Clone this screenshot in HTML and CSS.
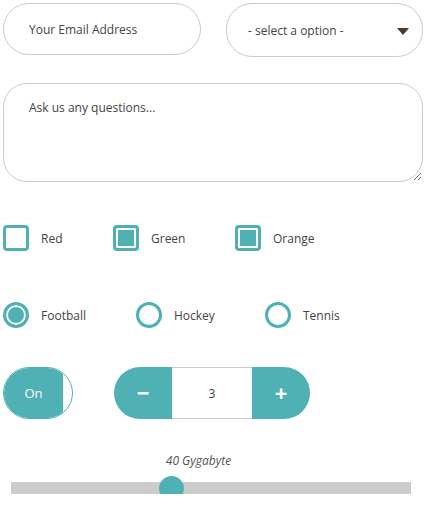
FILE: index.html
```
<!DOCTYPE html>
<html lang="en">
<head>
    <meta charset="UTF-8">
    <meta name="viewport" content="width=device-width, initial-scale=1.0">
    <title>Form Elements</title>
    <link rel="stylesheet" href="styles.css">
</head>
<body>
    <div class="form">
        <div class="row-top">
            <input type="text" class="field" placeholder="Your Email Address">
            <div class="select-wrap">
                <select class="field select">
                    <option>- select a option -</option>
                </select>
                <span class="caret"></span>
            </div>
        </div>

        <textarea class="area" placeholder="Ask us any questions..."></textarea>

        <div class="choices checks">
            <label class="choice"><span class="box"></span>Red</label>
            <label class="choice"><span class="box on"></span>Green</label>
            <label class="choice"><span class="box on"></span>Orange</label>
        </div>

        <div class="choices radios">
            <label class="choice"><span class="dot on"></span>Football</label>
            <label class="choice"><span class="dot"></span>Hockey</label>
            <label class="choice"><span class="dot"></span>Tennis</label>
        </div>

        <div class="controls">
            <div class="toggle">
                <span class="toggle-on">On</span>
            </div>
            <div class="stepper">
                <button class="step">&minus;</button>
                <span class="count">3</span>
                <button class="step">+</button>
            </div>
        </div>

        <div class="slider">
            <div class="slider-label">40 Gygabyte</div>
            <div class="track">
                <span class="thumb" style="left: 40%"></span>
            </div>
        </div>
    </div>
</body>
</html>
```
FILE: styles.css
```
body {
    margin: 0;
    font-family: "Open Sans", Arial, sans-serif;
    font-size: 12px;
    color: #444;
    background: #fff;
}
.form {
    padding: 3px 2px 0 3px;
}
.row-top {
    display: flex;
    gap: 25px;
    align-items: flex-start;
}
.field {
    box-sizing: border-box;
    width: 198px;
    height: 52px;
    border: 1px solid #ccc;
    border-radius: 26px;
    padding: 0 25px;
    font-family: inherit;
    font-size: 12px;
    color: #444;
    background: #fff;
    outline: none;
}
.field::placeholder {
    color: #444;
}
.select-wrap {
    position: relative;
}
.select {
    width: 197px;
    height: 54px;
    padding-left: 21px;
    appearance: none;
    -webkit-appearance: none;
}
.caret {
    position: absolute;
    right: 14px;
    top: 25px;
    border-left: 6px solid transparent;
    border-right: 6px solid transparent;
    border-top: 7px solid #4a3a2a;
}
.area {
    display: block;
    box-sizing: border-box;
    width: 420px;
    height: 99px;
    margin-top: 26px;
    border: 1px solid #ccc;
    border-radius: 24px;
    padding: 15px 25px;
    font-family: inherit;
    font-size: 12px;
    color: #444;
    outline: none;
}
.area::placeholder {
    color: #444;
}
.choices {
    display: flex;
}
.choice {
    display: flex;
    align-items: center;
    gap: 12px;
}
.checks {
    margin-top: 43px;
}
.checks .choice:nth-child(1) { width: 110px; }
.checks .choice:nth-child(2) { width: 122px; }
.box {
    box-sizing: border-box;
    width: 26px;
    height: 26px;
    border: 3px solid #50b1b5;
    border-radius: 4px;
    background: #fff;
}
.box.on {
    background: #50b1b5;
    box-shadow: inset 0 0 0 2px #fff;
}
.radios {
    margin-top: 51px;
}
.radios .choice:nth-child(1) { width: 133px; }
.radios .choice:nth-child(2) { width: 129px; }
.dot {
    box-sizing: border-box;
    width: 26px;
    height: 26px;
    border: 3px solid #50b1b5;
    border-radius: 50%;
    background: #fff;
}
.dot.on {
    background: #50b1b5;
    box-shadow: inset 0 0 0 2px #fff;
}
.controls {
    display: flex;
    gap: 41px;
    margin-top: 39px;
}
.toggle {
    box-sizing: border-box;
    width: 70px;
    height: 52px;
    border: 1px solid #50b1b5;
    border-radius: 26px;
    overflow: hidden;
    display: flex;
}
.toggle-on {
    width: 59px;
    background: #50b1b5;
    color: #fff;
    font-size: 13px;
    display: flex;
    align-items: center;
    justify-content: center;
}
.stepper {
    display: flex;
    height: 52px;
}
.step {
    width: 58px;
    border: none;
    background: #50b1b5;
    color: #fff;
    font-family: "Open Sans", sans-serif;
    font-size: 22px;
    font-weight: bold;
    padding: 0 0 3px;
    cursor: pointer;
}
.step:first-child {
    border-radius: 26px 0 0 26px;
}
.step:last-child {
    border-radius: 0 26px 26px 0;
}
.count {
    box-sizing: border-box;
    width: 80px;
    border-top: 1px solid #ccc;
    border-bottom: 1px solid #ccc;
    display: flex;
    align-items: center;
    justify-content: center;
}
.slider {
    margin-top: 33px;
    padding: 0 12px 0 8px;
}
.slider-label {
    text-align: center;
    font-style: italic;
    font-size: 12px;
    color: #555;
    line-height: 18px;
    margin-left: -8px;
    padding-right: 17px;
}
.track {
    position: relative;
    height: 12px;
    margin-top: 12px;
    background: #ccc;
}
.thumb {
    position: absolute;
    top: -6px;
    width: 25px;
    height: 25px;
    margin-left: -12px;
    border-radius: 50%;
    background: #50b1b5;
}
```
